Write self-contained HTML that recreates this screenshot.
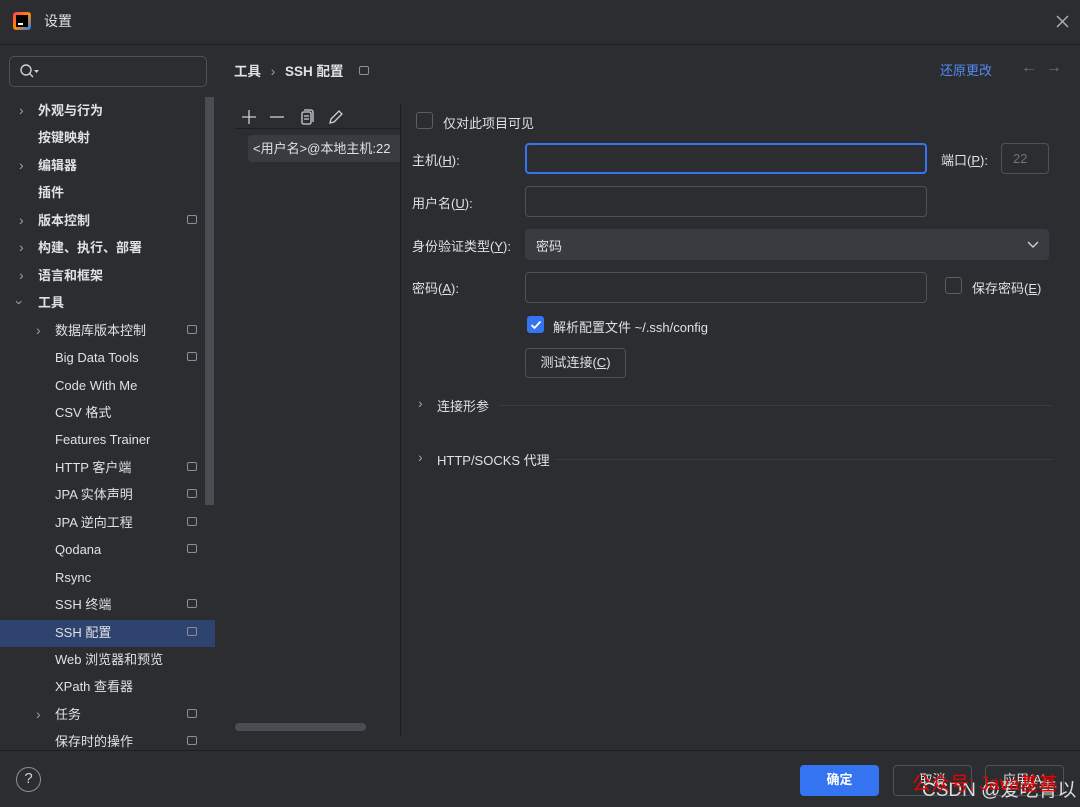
<!DOCTYPE html>
<html><head><meta charset="utf-8"><style>
*{margin:0;padding:0;box-sizing:border-box}
body{width:1080px;height:807px;background:#2b2d30;color:#dfe1e5;font-family:"Liberation Sans","Noto Sans CJK SC",sans-serif;font-size:13px;position:relative;overflow:hidden}
.a{position:absolute}
.row{position:absolute;left:0;width:215px;height:27px;line-height:27px;white-space:nowrap}
.row .t{position:absolute;top:1px}
.chev{position:absolute;top:1px;color:#9da0a8;font-size:14px}
.pin{position:absolute;left:187px;top:9px;width:10px;height:9px;border:1.3px solid #8c8f96;border-radius:2px}
.in{position:absolute;border:1px solid #4e5157;border-radius:4px;background:#2b2d30}
.lbl{position:absolute;left:412px}
.btn{position:absolute;border:1px solid #4e5157;border-radius:4px;text-align:center;line-height:28px}
.cb{position:absolute;width:17px;height:17px;border:1px solid #5a5d63;border-radius:3px}
</style></head><body>
<div class="a" style="left:13px;top:12px;width:18px;height:18px;background:linear-gradient(135deg,#ff3a5e,#ff8a00 50%,#1f7bff);border-radius:3px"></div>
<div class="a" style="left:16px;top:15px;width:12px;height:12px;background:#000"></div>
<div class="a" style="left:18px;top:23px;width:5px;height:1.5px;background:#fff"></div>
<div class="a" style="left:44px;top:11px;font-size:14px">设置</div>
<svg class="a" style="left:1056px;top:15px" width="13" height="13"><path d="M1 1l11 11M12 1L1 12" stroke="#b0b3b8" stroke-width="1.4"/></svg>
<div class="a" style="left:0;top:44px;width:1080px;height:1px;background:#1e1f22"></div>
<div class="in" style="left:9px;top:56px;width:198px;height:31px;border-radius:5px"></div>
<svg class="a" style="left:19px;top:63px" width="22" height="16"><circle cx="7" cy="7" r="5" fill="none" stroke="#ced0d6" stroke-width="1.4"/><line x1="10.5" y1="10.5" x2="14" y2="14" stroke="#ced0d6" stroke-width="1.4"/><path d="M15 7h5l-2.5 3z" fill="#ced0d6"/></svg>
<div class="a" style="left:205px;top:97px;width:9px;height:408px;background:#4b4d52"></div>
<div class="row" style="top:620px;background:#2e436e"></div>
<div id="tree"></div>
<div class="a" style="left:234px;top:60px;font-size:13.5px;font-weight:bold">工具 <span style="color:#9da0a8;font-weight:normal;margin:0 6px">›</span> SSH 配置</div>
<div class="a" style="left:359px;top:66px;width:10px;height:9px;border:1.3px solid #8c8f96;border-radius:2px"></div>
<div class="a" style="left:940px;top:60px;color:#548af7">还原更改</div>
<div class="a" style="left:1021px;top:59px;color:#6f737a;font-size:16px">←&nbsp;&nbsp;→</div>
<svg class="a" style="left:240px;top:108px" width="110" height="18" stroke="#ced0d6" stroke-width="1.3" fill="none"><path d="M9 2v14M2 9h14"/><path d="M30 9h14"/><rect x="62" y="4" width="9" height="12" rx="1.5"/><path d="M64 2h7a2 2 0 0 1 2 2v10"/><path d="M64 8h5M64 11h5"/><path d="M90 15l1-4 8-8 3 3-8 8z"/></svg>
<div class="a" style="left:235px;top:128px;width:165px;height:1px;background:#1e1f22"></div>
<div class="a" style="left:248px;top:135px;width:152px;height:27px;background:#393b40;border-radius:4px 0 0 4px;line-height:27px;padding-left:5px;white-space:nowrap;overflow:hidden">&lt;用户名&gt;@本地主机:22</div>
<div class="a" style="left:400px;top:104px;width:1px;height:632px;background:#1e1f22"></div>
<div class="a" style="left:235px;top:723px;width:131px;height:8px;background:#4b4d52;border-radius:4px"></div>
<div class="cb" style="left:416px;top:112px"></div>
<div class="a" style="left:443px;top:113px">仅对此项目可见</div>
<div class="lbl" style="top:150px">主机(<u>H</u>):</div>
<div class="in" style="left:525px;top:143px;width:402px;height:31px;border:2px solid #3574f0"></div>
<div class="a" style="left:941px;top:150px">端口(<u>P</u>):</div>
<div class="in" style="left:1001px;top:143px;width:48px;height:31px;color:#6f737a;padding:7px 0 0 11px">22</div>
<div class="lbl" style="top:193px">用户名(<u>U</u>):</div>
<div class="in" style="left:525px;top:186px;width:402px;height:31px"></div>
<div class="lbl" style="top:236px">身份验证类型(<u>Y</u>):</div>
<div class="in" style="left:525px;top:229px;width:524px;height:31px;background:#393b40;border-color:#393b40;padding:6px 0 0 10px">密码</div>
<svg class="a" style="left:1027px;top:240px" width="12" height="9"><path d="M1 2l5 5 5-5" stroke="#ced0d6" stroke-width="1.4" fill="none"/></svg>
<div class="lbl" style="top:278px">密码(<u>A</u>):</div>
<div class="in" style="left:525px;top:272px;width:402px;height:31px"></div>
<div class="cb" style="left:945px;top:277px"></div>
<div class="a" style="left:972px;top:278px">保存密码(<u>E</u>)</div>
<div class="cb" style="left:527px;top:316px;background:#3574f0;border-color:#3574f0"></div>
<svg class="a" style="left:529px;top:318px" width="14" height="14"><path d="M2.5 7l3 3 6-6.5" stroke="#fff" stroke-width="1.8" fill="none"/></svg>
<div class="a" style="left:553px;top:317px">解析配置文件 ~/.ssh/config</div>
<div class="btn" style="left:525px;top:348px;width:101px;height:30px">测试连接(<u>C</u>)</div>
<div class="a" style="left:418px;top:395px;color:#9da0a8;font-size:14px">›</div>
<div class="a" style="left:437px;top:396px">连接形参</div>
<div class="a" style="left:498px;top:405px;width:554px;height:1px;background:#393b40"></div>
<div class="a" style="left:418px;top:449px;color:#9da0a8;font-size:14px">›</div>
<div class="a" style="left:437px;top:450px">HTTP/SOCKS 代理</div>
<div class="a" style="left:556px;top:459px;width:496px;height:1px;background:#393b40"></div>
<div class="a" style="left:0;top:750px;width:1080px;height:1px;background:#1e1f22"></div>
<div class="a" style="left:16px;top:767px;width:25px;height:25px;border:1.3px solid #8c8f96;border-radius:50%;text-align:center;line-height:22px;font-size:15px;color:#ced0d6">?</div>
<div class="btn" style="left:800px;top:765px;width:79px;height:31px;background:#3574f0;border-color:#3574f0;color:#fff;font-weight:bold">确定</div>
<div class="btn" style="left:893px;top:765px;width:79px;height:31px">取消</div>
<div class="btn" style="left:985px;top:765px;width:79px;height:31px">应用(A)</div>
<div class="a" style="left:922px;top:775px;font-size:19px;color:#ddd;white-space:nowrap">CSDN @爱吃青以</div>
<div class="a" style="left:912px;top:769px;font-size:19px;color:#e00;white-space:nowrap">公众号: Java基基</div>
<script>
var r=[["外观与行为",38,1,1],["按键映射",38,0,1],["编辑器",38,1,1],["插件",38,0,1],["版本控制",38,1,1,1],["构建、执行、部署",38,1,1],["语言和框架",38,1,1],["工具",38,2,1],["数据库版本控制",55,1,0,1],["Big Data Tools",55,0,0,1],["Code With Me",55],["CSV 格式",55],["Features Trainer",55],["HTTP 客户端",55,0,0,1],["JPA 实体声明",55,0,0,1],["JPA 逆向工程",55,0,0,1],["Qodana",55,0,0,1],["Rsync",55],["SSH 终端",55,0,0,1],["SSH 配置",55,0,0,1],["Web 浏览器和预览",55],["XPath 查看器",55],["任务",55,1,0,1],["保存时的操作",55,0,0,1]];
var h="";r.forEach(function(x,i){var top=96+i*27.45;var bold=x[3]?"font-weight:bold;":"";
h+='<div class="row" style="top:'+top+'px">';
if(x[2]==1)h+='<span class="chev" style="left:'+(x[1]-19)+'px">›</span>';
if(x[2]==2)h+='<span class="chev" style="left:'+(x[1]-21)+'px;transform:rotate(90deg)">›</span>';
h+='<span class="t" style="left:'+x[1]+'px;'+bold+'">'+x[0]+'</span>';
if(x[4])h+='<span class="pin"></span>';h+='</div>';});
document.getElementById("tree").innerHTML=h;
</script>
</body></html>
